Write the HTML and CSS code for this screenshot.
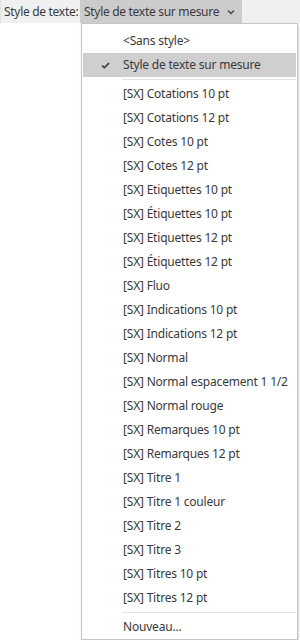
FILE: index.html
```html
<!DOCTYPE html>
<html lang="fr">
<head>
  <meta charset="UTF-8">
  <meta name="viewport" content="width=device-width, initial-scale=1.0">
  <title>Style de texte</title>
  <link rel="stylesheet" href="styles.css">
</head>
<body>
  <div class="toolbar">
    <span class="label">Style de texte:</span>
    <div class="picker">
      <span>Style de texte sur mesure</span>
      <svg class="chevron" width="8" height="6" viewBox="0 0 8 6"><path d="M1 1.5 L4 4.5 L7 1.5" fill="none" stroke="#444" stroke-width="1.4"/></svg>
    </div>
  </div>

  <div class="menu-wrap">
    <div class="menu">
      <div class="item">&lt;Sans style&gt;</div>
      <div class="item selected">
        <svg class="check" width="9" height="7" viewBox="0 0 9 7"><path d="M1 3.5 L3.4 5.8 L8 1" fill="none" stroke="#333" stroke-width="1.5"/></svg>
        Style de texte sur mesure
      </div>
      <div class="sep"></div>
      <div class="item">[SX] Cotations 10 pt</div>
      <div class="item">[SX] Cotations 12 pt</div>
      <div class="item">[SX] Cotes 10 pt</div>
      <div class="item">[SX] Cotes 12 pt</div>
      <div class="item">[SX] Etiquettes 10 pt</div>
      <div class="item">[SX] Étiquettes 10 pt</div>
      <div class="item">[SX] Etiquettes 12 pt</div>
      <div class="item">[SX] Étiquettes 12 pt</div>
      <div class="item">[SX] Fluo</div>
      <div class="item">[SX] Indications 10 pt</div>
      <div class="item">[SX] Indications 12 pt</div>
      <div class="item">[SX] Normal</div>
      <div class="item">[SX] Normal espacement 1 1/2</div>
      <div class="item">[SX] Normal rouge</div>
      <div class="item">[SX] Remarques 10 pt</div>
      <div class="item">[SX] Remarques 12 pt</div>
      <div class="item">[SX] Titre 1</div>
      <div class="item">[SX] Titre 1 couleur</div>
      <div class="item">[SX] Titre 2</div>
      <div class="item">[SX] Titre 3</div>
      <div class="item">[SX] Titres 10 pt</div>
      <div class="item">[SX] Titres 12 pt</div>
      <div class="sep"></div>
      <div class="item">Nouveau...</div>
    </div>
  </div>
</body>
</html>
```

FILE: styles.css
```css
body {
  margin: 0;
  background: #ffffff;
  font-family: "Noto Sans", "Open Sans", sans-serif;
  font-size: 12px;
  color: #3a3a3a;
}
.toolbar {
  display: flex;
  align-items: stretch;
  height: 23px;
  background: #f0f0f0;
  border-left: 1px solid #e2e2e2;
  white-space: nowrap;
  letter-spacing: -0.3px;
}
.label {
  display: flex;
  align-items: center;
  flex-shrink: 0;
  width: 76px;
  padding-left: 3px;
}
.picker {
  display: flex;
  align-items: center;
  justify-content: space-between;
  flex-shrink: 0;
  width: 151px;
  padding: 0 7px 0 4px;
  background: #cccccc;
}
.menu-wrap {
  padding-left: 81px;
}
.menu {
  width: 215px;
  background: #ffffff;
  border: 1px solid #c6c6c6;
  box-shadow: 1px 2px 3px rgba(0, 0, 0, 0.18);
  padding: 5px 0 0 0;
}
.item {
  position: relative;
  height: 24px;
  line-height: 24px;
  padding-left: 41px;
  white-space: nowrap;
  letter-spacing: -0.2px;
}
.item.selected {
  background: #cfcfcf;
  margin: 0 1px;
  padding-left: 40px;
}
.check {
  position: absolute;
  left: 18px;
  top: 9px;
}
.sep {
  height: 1px;
  margin: 2px 1px 2px 40px;
  background: #e3e3e3;
}
```
